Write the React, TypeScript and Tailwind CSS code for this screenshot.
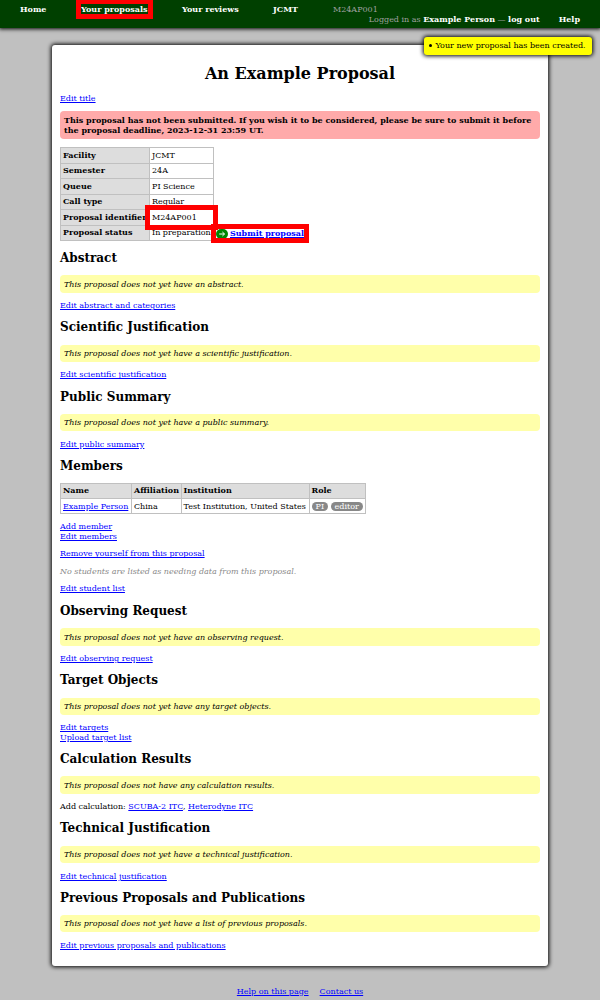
import type { ReactNode } from "react";

function Link({ children, bold = false }: { children: ReactNode; bold?: boolean }) {
  return (
    <a href="#" className={bold ? "font-bold text-[#0000ff] underline" : "text-[#0000ff] underline"}>
      {children}
    </a>
  );
}

function Heading({ children }: { children: ReactNode }) {
  return <h2 className="my-[10px] h-[14.3px] text-[12px] leading-[14.3px] font-bold">{children}</h2>;
}

function Note({ children }: { children: ReactNode }) {
  return <p className="mb-[8px] h-[17.5px] rounded-[4px] bg-[#ffffaa] px-[4px] pt-[4.4px] italic">{children}</p>;
}

function Section({ title, note, children }: { title: string; note: string; children: ReactNode }) {
  return (
    <section className="flow-root">
      <Heading>{title}</Heading>
      <Note>{note}</Note>
      <div className="-mb-[10.4px] pt-[0.4px] pb-[10px]">{children}</div>
    </section>
  );
}

function NavItem({ children, className }: { children: ReactNode; className: string }) {
  return <a href="#" className={"shrink-0 font-bold text-white " + className}>{children}</a>;
}

const facts = [
  ["Facility", "JCMT"],
  ["Semester", "24A"],
  ["Queue", "PI Science"],
  ["Call type", "Regular"],
  ["Proposal identifier", "M24AP001"],
  ["Proposal status", "In preparation"],
];

export default function App() {
  return (
    <div className="relative h-[1000px] w-[600px] overflow-hidden bg-[#c0c0c0] font-['DejaVu_Serif',serif] text-[8px] leading-[9.5px] text-black">
      <header className="relative h-[28px] bg-[#004000] pt-[4.5px] shadow-[0_0_4px_1px_#000000]">
        <nav className="flex h-[10px]">
          <NavItem className="ml-[20px] w-[61px]">Home</NavItem>
          <NavItem className="w-[101px]">Your proposals</NavItem>
          <NavItem className="w-[91px]">Your reviews</NavItem>
          <NavItem className="w-[60px]">JCMT</NavItem>
          <span className="text-[#a0a0a0]">M24AP001</span>
        </nav>
        <div className="flex h-[10px] justify-end pr-[20px] text-[#a0a0a0]">
          <span className="whitespace-pre">
            Logged in as <b className="text-white">Example Person</b> — <b className="text-white">log out</b>
          </span>
          <b className="ml-[19px] text-white">Help</b>
        </div>
        <div className="absolute top-[-1px] left-[76px] h-[20px] w-[77px] border-5 border-[#ff0000]" />
      </header>

      <ul className="absolute top-[37px] left-[423.5px] z-10 h-[17.5px] w-[168px] rounded-[3px] bg-[#ffff00] py-[4px] pl-[5px] whitespace-nowrap shadow-[0_0_4px_1px_#000000]">
        <li className="flex items-center">
          <span className="mr-[4px] size-[3px] rounded-full bg-black" />
          Your new proposal has been created.
        </li>
      </ul>

      <main className="relative mx-[52px] mt-[17px] h-[921px] rounded-[3px] bg-white px-[8px] pt-[19px] shadow-[0_0_4px_1px_#000000]">
        <h1 className="h-[19px] text-center text-[16px] leading-[19px] font-bold">An Example Proposal</h1>
        <p className="mt-[11px] h-[9.5px]"><Link>Edit title</Link></p>
        <p className="mt-[7.5px] h-[28px] rounded-[4px] bg-[#ffaaaa] px-[4px] pt-[4px] leading-[10px] font-bold">
          This proposal has not been submitted. If you wish it to be considered, please be sure to submit it before the proposal deadline, 2023-12-31 23:59 UT.
        </p>

        <div className="mt-[8px] flex items-end">
          <div className="w-[154px] shrink-0 border-t border-l border-[#c0c0c0]">
            {facts.map(([label, value]) => (
              <div key={label} className="flex h-[15.5px] whitespace-nowrap">
                <div className="w-[89px] shrink-0 border-r border-b border-[#c0c0c0] bg-[#dddddd] pt-[2.5px] pl-[2px] font-bold">{label}</div>
                <div className="grow border-r border-b border-[#c0c0c0] pt-[2.5px] pl-[2px]">{value}</div>
              </div>
            ))}
          </div>
          <div className="ml-[2px] flex h-[15px] items-center gap-[2px] whitespace-nowrap">
            <svg className="h-[10px] w-[12px]" viewBox="0 0 12 10">
              <rect width="12" height="10" rx="5" fill="#008800" />
              <path d="M3.2 5H8.5M6.4 3L8.5 5L6.4 7" stroke="white" strokeWidth="1" fill="none" />
            </svg>
            <Link bold>Submit proposal</Link>
          </div>
        </div>
        <div className="absolute top-[160px] left-[93px] h-[25px] w-[73px] border-5 border-[#ff0000]" />
        <div className="absolute top-[178.5px] left-[159px] h-[19.5px] w-[98px] border-5 border-[#ff0000]" />

        <Section title="Abstract" note="This proposal does not yet have an abstract."><Link>Edit abstract and categories</Link></Section>
        <Section title="Scientific Justification" note="This proposal does not yet have a scientific justification."><Link>Edit scientific justification</Link></Section>
        <Section title="Public Summary" note="This proposal does not yet have a public summary."><Link>Edit public summary</Link></Section>

        <section className="flow-root">
          <Heading>Members</Heading>
          <div className="-mt-[0.5px] grid w-[306px] grid-cols-[71px_49.5px_128px_56.5px] border-t border-l border-[#c0c0c0] whitespace-nowrap *:h-[15.4px] *:border-r *:border-b *:border-[#c0c0c0] *:pt-[2.8px] *:pl-[2px]">
            <b className="bg-[#dddddd]">Name</b>
            <b className="bg-[#dddddd]">Affiliation</b>
            <b className="bg-[#dddddd]">Institution</b>
            <b className="bg-[#dddddd]">Role</b>
            <div><Link>Example Person</Link></div>
            <div>China</div>
            <div>Test Institution, United States</div>
            <div className="flex gap-[2.5px] text-white">
              <span className="h-[9.5px] rounded-full bg-[#888888] px-[4px]">PI</span>
              <span className="h-[9.5px] rounded-full bg-[#888888] px-[4px]">editor</span>
            </div>
          </div>
          <p className="mt-[8px] h-[19px]"><Link>Add member</Link><br /><Link>Edit members</Link></p>
          <p className="mt-[8px] h-[9.5px]"><Link>Remove yourself from this proposal</Link></p>
          <p className="mt-[8px] h-[9.5px] text-[#888888] italic">No students are listed as needing data from this proposal.</p>
          <p className="mt-[8px] h-[9.5px]"><Link>Edit student list</Link></p>
        </section>

        <Section title="Observing Request" note="This proposal does not yet have an observing request."><Link>Edit observing request</Link></Section>
        <Section title="Target Objects" note="This proposal does not yet have any target objects."><Link>Edit targets</Link><br /><Link>Upload target list</Link></Section>
        <Section title="Calculation Results" note="This proposal does not have any calculation results.">Add calculation: <Link>SCUBA-2 ITC</Link>, <Link>Heterodyne ITC</Link></Section>
        <Section title="Technical Justification" note="This proposal does not yet have a technical justification."><Link>Edit technical justification</Link></Section>
        <Section title="Previous Proposals and Publications" note="This proposal does not yet have a list of previous proposals."><Link>Edit previous proposals and publications</Link></Section>
      </main>

      <footer className="mt-[20.5px] flex justify-center gap-[11px]">
        <Link>Help on this page</Link>
        <Link>Contact us</Link>
      </footer>
    </div>
  );
}
